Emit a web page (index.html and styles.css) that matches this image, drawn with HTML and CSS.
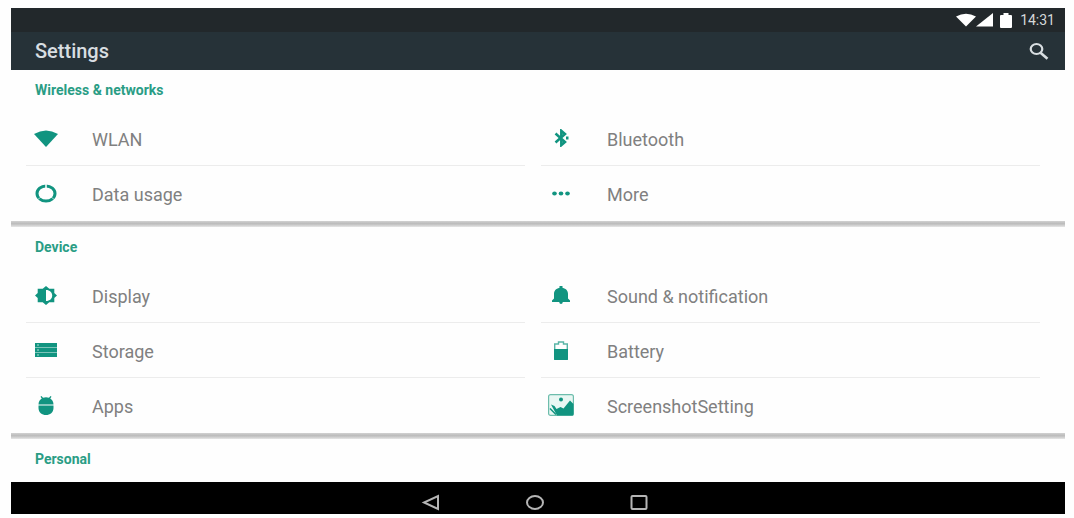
FILE: index.html
```html
<!DOCTYPE html>
<html lang="en">
<head>
<meta charset="utf-8">
<title>Settings</title>
<link rel="stylesheet" href="styles.css">
</head>
<body>
<div class="device">
  <header class="top">
    <div class="status">
      <svg class="status-icon" width="20" height="14" viewBox="0 0 20 14" aria-hidden="true"><path d="M0 3.500Q10-1.800 20 3.500L10 13.500z"/></svg>
      <svg class="status-icon" width="17" height="14" viewBox="0 0 17 14" aria-hidden="true"><path d="M17 0v13.500H0z"/></svg>
      <svg class="status-icon battery" width="12" height="15" viewBox="0 0 12 15" aria-hidden="true"><path d="M3.500 0h5v2H11q1 0 1 1v11q0 1-1 1H1q-1 0-1-1V3q0-1 1-1h2.500z"/></svg>
      <time class="clock">14:31</time>
    </div>
    <div class="bar">
      <h1 class="title">Settings</h1>
      <button class="search" type="button" aria-label="Search">
        <svg width="20" height="18" viewBox="0 0 20 18" aria-hidden="true"><ellipse cx="7.500" cy="7" rx="5.800" ry="5" fill="none" stroke="currentColor" stroke-width="2.200"/><path d="M11.500 10.700l7 6" fill="none" stroke="currentColor" stroke-width="2.600"/></svg>
      </button>
    </div>
  </header>

  <main class="content">
    <section class="group">
      <h2 class="group-title">Wireless &amp; networks</h2>
      <div class="grid">
        <a class="row" href="#wlan"><span class="icon"><svg width="24" height="17" viewBox="0 0 24 17"><path d="M0 4Q12-3 24 4L12 17z"/></svg></span><span class="label">WLAN</span></a>
        <a class="row" href="#bluetooth"><span class="icon"><svg width="15" height="18" viewBox="0 0 15 18"><path d="M1.500 4.500l9.500 8.500-3.700 3.200V1.800L11 5l-9.500 8.500" fill="none" stroke="currentColor" stroke-width="2.500"/><path d="M12 7.500h2.500v3H12z"/></svg></span><span class="label">Bluetooth</span></a>
        <a class="row" href="#data"><span class="icon"><svg width="22" height="19" viewBox="0 0 22 19"><ellipse cx="11" cy="9.500" rx="9" ry="7.500" fill="none" stroke="currentColor" stroke-width="3"/><path d="M11 5V0" stroke="#fff" stroke-width="1.500"/><path d="M2 16l4-3M20 16l-4-3" stroke="#fff" stroke-width=".6"/></svg></span><span class="label">Data usage</span></a>
        <a class="row" href="#more"><span class="icon"><svg width="18" height="5" viewBox="0 0 18 5"><ellipse cx="2.500" cy="2.500" rx="2.300" ry="2"/><ellipse cx="9" cy="2.500" rx="2.300" ry="2"/><ellipse cx="15.500" cy="2.500" rx="2.300" ry="2"/></svg></span><span class="label">More</span></a>
      </div>
    </section>

    <section class="group">
      <h2 class="group-title">Device</h2>
      <div class="grid">
        <a class="row" href="#display"><span class="icon"><svg width="22" height="19" viewBox="0 0 22 19"><path fill-rule="evenodd" d="M11 0l3.300 2.800h5v4.200L22 9.500 19.300 12v4.200h-5L11 19l-3.300-2.800h-5V12L0 9.500 2.700 7V2.800h5zM11 4v11c4 0 6.200-2.500 6.200-5.500S15 4 11 4z"/></svg></span><span class="label">Display</span></a>
        <a class="row" href="#sound"><span class="icon"><svg width="18" height="18" viewBox="0 0 18 18"><path d="M7.500 0h3v1.700c3.800.8 5.500 3.300 5.500 6v4.800l2 2v1.500H0v-1.500l2-2V7.700c0-2.700 1.700-5.200 5.500-6zM7 15.500h4q-.5 2.500-2 2.500t-2-2.500z"/></svg></span><span class="label">Sound &amp; notification</span></a>
        <a class="row" href="#storage"><span class="icon"><svg width="22" height="14" viewBox="0 0 22 14"><path opacity=".55" d="M0 0h22v14H0z"/><path fill-rule="evenodd" d="M0 0h22v4H0zM0 5h22v4H0zM0 10h22v4H0zM2 1.200v1.600h2V1.200zM2 6.200v1.600h2V6.200zM2 11.200v1.600h2v-1.600z"/></svg></span><span class="label">Storage</span></a>
        <a class="row" href="#battery"><span class="icon"><svg width="14" height="19" viewBox="0 0 14 19"><path d="M.7 18.300V3h3.800V1h5v2h3.800v15.300z" fill="none" stroke="currentColor" stroke-width="1.400" opacity=".7"/><path d="M0 8h14v10q0 1-1 1H1q-1 0-1-1z"/></svg></span><span class="label">Battery</span></a>
        <a class="row" href="#apps"><span class="icon"><svg width="16" height="19" viewBox="0 0 16 19"><path d="M.5 8.500C.5 5.500 2 3.500 3.800 2.500L2.500.8l1-.8L5 1.800q3-1 6 0L12.500 0l1 .8-1.300 1.700c1.800 1 3.300 3 3.300 6zM.5 9.500h15v2.500c0 4.500-3.500 7-7.500 7s-7.500-2.500-7.500-7z"/></svg></span><span class="label">Apps</span></a>
        <a class="row" href="#screenshot"><span class="icon"><svg width="26" height="22" viewBox="0 0 26 22"><rect x=".6" y=".6" width="24.800" height="20.800" rx="2" fill="#e9f7f3" stroke="#6dbdac" stroke-width="1.200"/><circle cx="13" cy="5.500" r="2"/><path d="M3 10.500l3.500 1.500 2 3 4-2 3 1.500L22 6.500l3.500 3.500v10q0 1.500-1.500 1.500H9z"/><path d="M2 14.500l6 6" stroke="currentColor" stroke-width="1.500"/></svg></span><span class="label">ScreenshotSetting</span></a>
      </div>
    </section>

    <section class="group">
      <h2 class="group-title">Personal</h2>
    </section>
  </main>

  <nav class="nav">
    <button class="nav-button" type="button" aria-label="Back"><svg width="20" height="17" viewBox="0 0 20 17"><path d="M17 2v13L3 8.500z"/></svg></button>
    <button class="nav-button" type="button" aria-label="Home"><svg width="20" height="17" viewBox="0 0 20 17"><ellipse cx="10" cy="8.500" rx="8" ry="6.500"/></svg></button>
    <button class="nav-button" type="button" aria-label="Recent apps"><svg width="20" height="17" viewBox="0 0 20 17"><rect x="2.500" y="2" width="15" height="13" rx="1"/></svg></button>
  </nav>
</div>
</body>
</html>
```
FILE: styles.css
```css
* {
  box-sizing: border-box;
}

body {
  margin: 0;
  background: #fefefe;
  font-family: Roboto, "Liberation Sans", sans-serif;
  color: #808080;
}

.device {
  display: flex;
  flex-direction: column;
  min-height: 100vh;
  padding: 8px 9px 4px 11px;
}

.top {
  background: #263238;
  color: #d8dee1;
}

.status {
  display: flex;
  align-items: center;
  justify-content: flex-end;
  height: 24px;
  padding-right: 10px;
  background: #22282b;
}

.status-icon {
  fill: #fff;
}

.battery {
  margin: 0 8px 0 7px;
}

.clock {
  font-size: 14px;
  line-height: 24px;
  color: #d5d8d9;
}

.bar {
  display: flex;
  align-items: center;
  justify-content: space-between;
  height: 38px;
  padding: 0 16px 0 24px;
}

.title {
  margin: 0;
  font-size: 20px;
  line-height: 24px;
  font-weight: 500;
}

button {
  display: flex;
  padding: 0;
  border: 0;
  background: none;
  color: inherit;
}

.content {
  flex: 1;
}

.group + .group::before {
  content: "";
  display: block;
  height: 6px;
  background: linear-gradient(#d2d2d2, #bcbcbc 40%, #c6c6c6 60%, #e6e6e6);
}

.group-title {
  margin: 0;
  padding-left: 24px;
  font-size: 14px;
  line-height: 41px;
  font-weight: 700;
  color: #2a9d85;
}

.grid {
  display: grid;
  grid-template-columns: 1fr 1fr;
  column-gap: 16px;
  padding: 0 25px 0 15px;
}

.row {
  display: flex;
  align-items: center;
  gap: 26px;
  height: 55px;
  border-bottom: 1px solid #ececec;
  font-size: 18px;
  line-height: 24px;
  color: inherit;
  text-decoration: none;
}

.row:nth-last-child(-n+2) {
  border-bottom-color: transparent;
}

.icon {
  display: flex;
  justify-content: center;
  width: 40px;
  color: #119480;
}

.icon svg {
  fill: currentColor;
}

.label {
  padding-top: 3px;
}

.nav {
  display: flex;
  align-items: center;
  justify-content: center;
  gap: 84px;
  height: 32px;
  padding: 8px 6px 0 0;
  background: #000;
}

.nav-button svg {
  fill: none;
  stroke: #b5b5b5;
  stroke-width: 2;
}
```
